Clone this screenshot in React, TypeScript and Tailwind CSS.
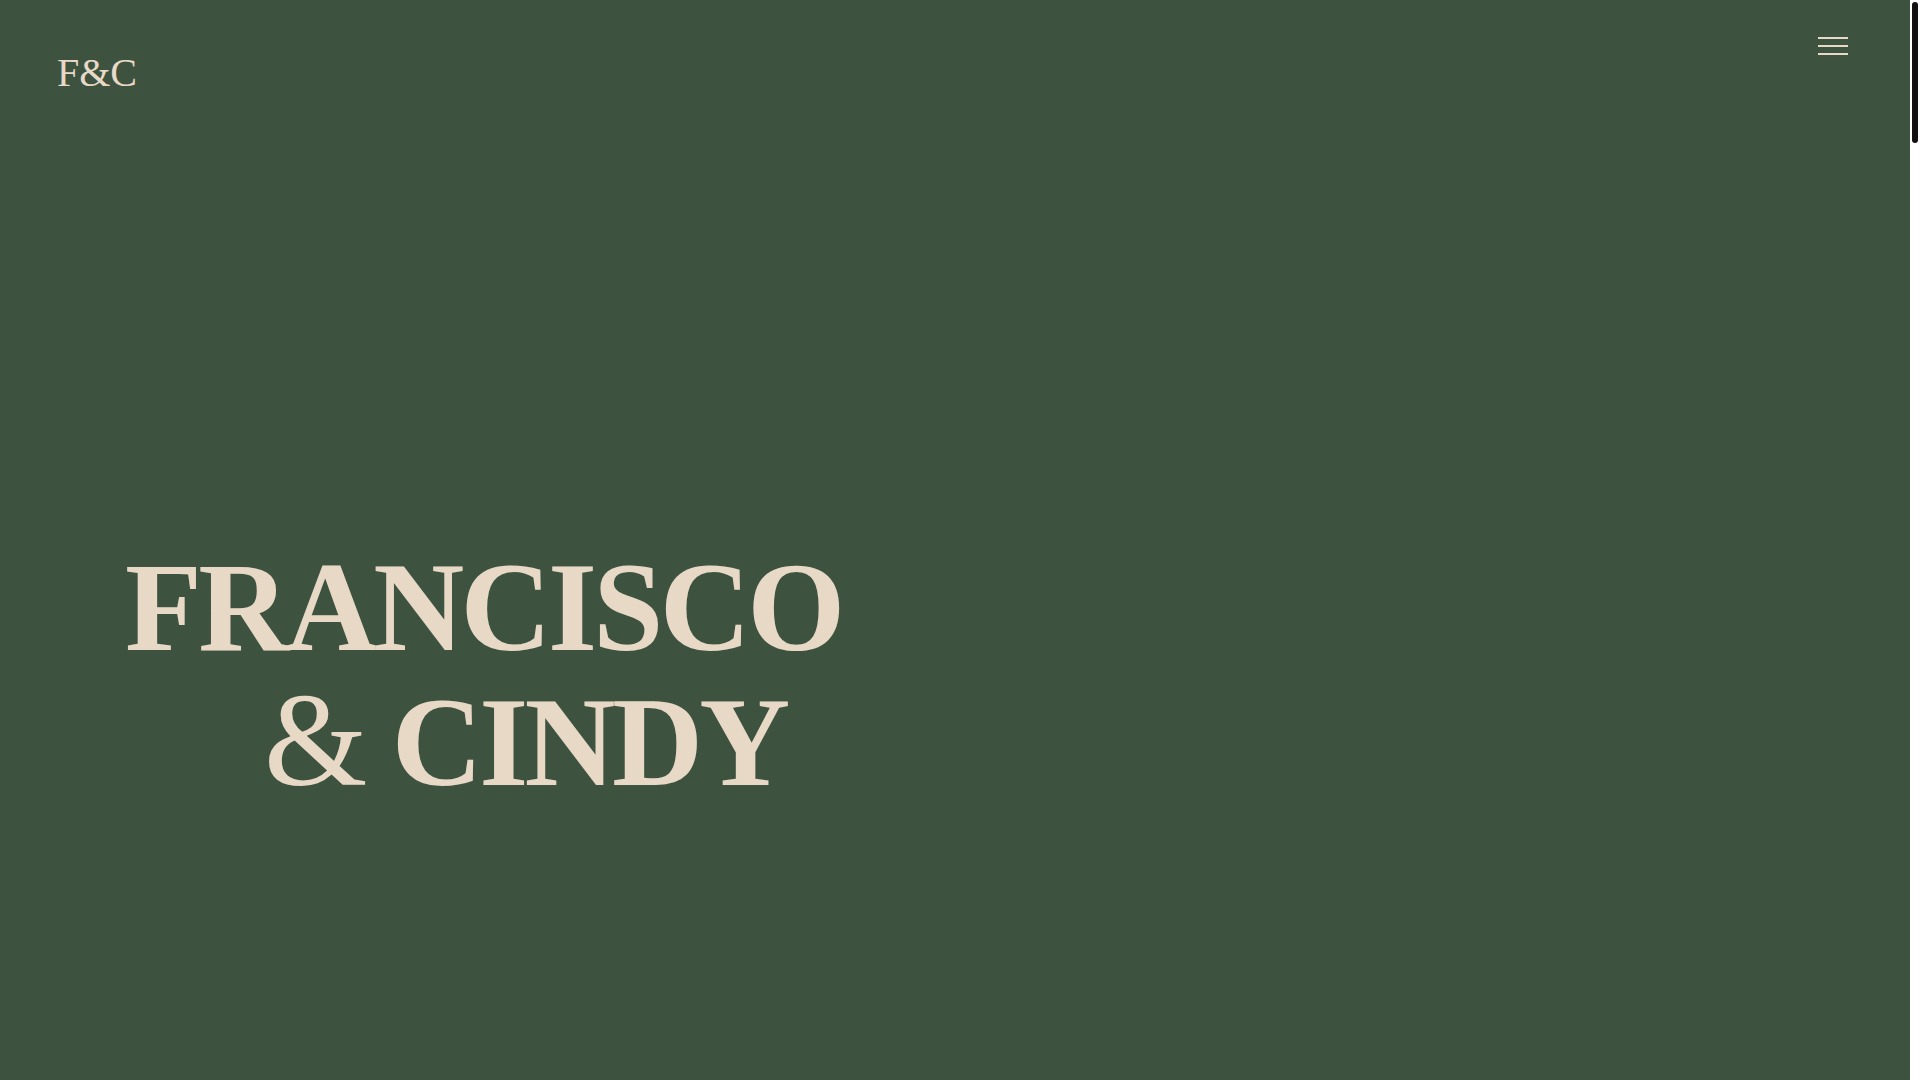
import React from 'react';

const serif = "font-['Liberation_Serif','Times_New_Roman',serif]";

function Header() {
  return (
    <header className="flex flex-row items-start justify-between pl-[57px] pr-[56px]">
      <a href="#" className={`${serif} mt-[50px] text-[40px] leading-[46px] text-[#e8d9c6]`}>
        F&amp;C
      </a>
      <button className="mt-[31px] flex flex-col gap-[6px] p-[6px]" aria-label="Menu">
        <span className="block h-[2px] w-[30px] bg-[#e8d9c6]" />
        <span className="block h-[2px] w-[30px] bg-[#e8d9c6]" />
        <span className="block h-[2px] w-[30px] bg-[#e8d9c6]" />
      </button>
    </header>
  );
}

// page scrollbar, as it shows on the right edge
function ScrollTrack() {
  return (
    <div className="fixed top-0 right-0 z-10 h-screen w-[10px] bg-white">
      <div className="absolute top-[2px] left-[2px] h-[141px] w-[6px] rounded-full bg-[#111]" />
    </div>
  );
}

export default function App() {
  return (
    <div className="h-screen overflow-y-scroll bg-[#3e5240] pr-[10px] [scrollbar-width:none]">
      <ScrollTrack />

      {/* Hero */}
      <section className="flex h-[1080px] flex-col">
        <Header />
        <div className="pt-[446px] pl-[125px]">
          <h1 className={`${serif} text-[126px] leading-[132px] font-bold tracking-[-3.6px] text-[#e8d9c6]`}>
            <span className="block">FRANCISCO</span>
            <span className="block pl-[139px]">
              <span className="text-[133px] font-normal">&amp;</span> CINDY
            </span>
          </h1>
        </div>
      </section>

      {/* Rest of the page, below the fold */}
      <section className="h-[2400px]" />
      <section className="h-[2400px]" />
      <section className="h-[2160px]" />
    </div>
  );
}
